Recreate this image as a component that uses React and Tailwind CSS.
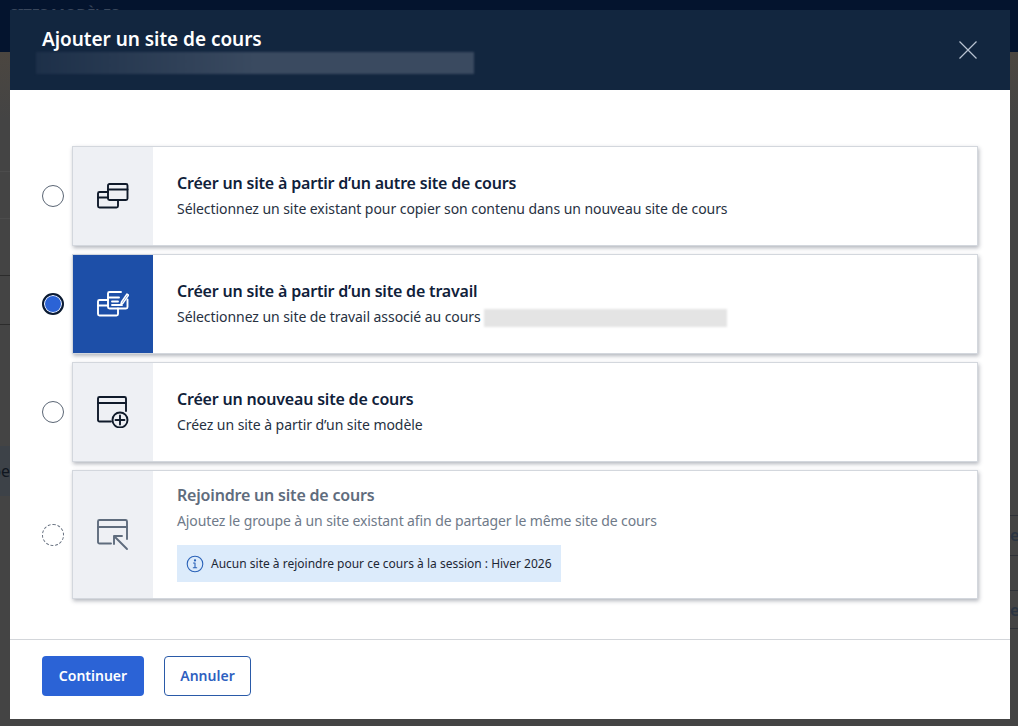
import React from "react";

function Radio({ state }) {
  if (state === "checked")
    return (
      <div className="w-[22px] h-[22px] rounded-full border-2 border-[#0b1a30] bg-[#2b63d6] shadow-[inset_0_0_0_1px_#fff]" />
    );
  if (state === "disabled")
    return <div className="w-[22px] h-[22px] rounded-full border border-dashed border-[#66707f] bg-white" />;
  return <div className="w-[22px] h-[22px] rounded-full border border-[#5b6675] bg-white" />;
}

function CopyIcon({ color }) {
  return (
    <svg width="32" height="26" viewBox="0 0 32 26" fill="none" stroke={color} strokeWidth="1.9" strokeLinejoin="round" strokeLinecap="round">
      <rect x="11" y="1" width="19.500" height="16" rx="1.500" />
      <path d="M11 6.500h19.500" />
      <path d="M11 9H2.500A1.500 1.500 0 0 0 1 10.500V23a1.500 1.500 0 0 0 1.500 1.500h17A1.500 1.500 0 0 0 21 23v-6" />
      <path d="M1 14.500h10" />
    </svg>
  );
}

function WorkIcon({ color }) {
  return (
    <svg width="32" height="26" viewBox="0 0 32 26" fill="none" stroke={color} strokeWidth="1.9" strokeLinejoin="round" strokeLinecap="round">
      <path d="M24 1H12.500A1.500 1.500 0 0 0 11 2.500V16a1.500 1.500 0 0 0 1.500 1.500H29a1.500 1.500 0 0 0 1.500-1.500V8.500" />
      <path d="M11 6.500h11" />
      <path d="M15 10.500h6M15 14h10" />
      <path d="M24.500 11l5.500-8 1.500 1.200-5.500 8-2 .6z" strokeWidth="1.500" />
      <path d="M11 9H2.500A1.500 1.500 0 0 0 1 10.500V23a1.500 1.500 0 0 0 1.500 1.500h17A1.500 1.500 0 0 0 21 23v-5.500" />
      <path d="M1 14.500h10" />
    </svg>
  );
}

function NewIcon({ color }) {
  return (
    <svg width="32" height="32" viewBox="0 0 32 32" fill="none" stroke={color} strokeWidth="1.9" strokeLinejoin="round" strokeLinecap="round">
      <path d="M14 25.500H2.500A1.500 1.500 0 0 1 1 24V2.500A1.500 1.500 0 0 1 2.500 1h25A1.500 1.500 0 0 1 29 2.500V15" />
      <path d="M1 7h28" />
      <circle cx="23" cy="24" r="7.500" />
      <path d="M23 19.500v9M18.500 24h9" />
    </svg>
  );
}

function JoinIcon({ color }) {
  return (
    <svg width="32" height="32" viewBox="0 0 32 32" fill="none" stroke={color} strokeWidth="1.9" strokeLinejoin="round" strokeLinecap="round">
      <path d="M14 24.500H2.500A1.500 1.500 0 0 1 1 23V2.500A1.500 1.500 0 0 1 2.500 1h26A1.500 1.500 0 0 1 30 2.500V20" />
      <path d="M1 8h29" />
      <path d="M17 17l13 13M17 17v8M17 17h8" />
    </svg>
  );
}

function InfoIcon() {
  return (
    <svg width="18" height="18" viewBox="0 0 18 18" fill="none" stroke="#2a62b8" strokeWidth="1.100" strokeLinecap="round">
      <circle cx="9" cy="9" r="7.800" />
      <path d="M9 8v4.500M7.500 8H9M7.300 12.700h3.400" />
      <circle cx="9" cy="5.400" r=".6" fill="#2a62b8" />
    </svg>
  );
}

function Option({ radio, selected, disabled, height, top, icon, title, children }) {
  return (
    <div className="flex items-center">
      <div className="w-[62px] pl-[32px] flex-none flex items-center">
        <Radio state={radio} />
      </div>
      <div className={`flex flex-1 border border-[#d3d7dd] bg-white shadow-[1px_2px_4px_rgba(40,50,70,0.35)] ${height}`}>
        <div className={`w-[80px] flex-none flex items-center justify-center ${selected ? "bg-[#1d4fa8]" : "bg-[#eef0f4]"}`}>
          {icon}
        </div>
        <div className={`flex-1 pl-[24px] ${top}`}>
          <div className={`text-[16px] leading-[24px] font-semibold tracking-[-0.19px] ${disabled ? "text-[#5f6c7d]" : "text-[#10213a]"}`}>
            {title}
          </div>
          <div className={`text-[14px] leading-[20px] mt-[4px] ${disabled ? "tracking-[-0.11px] text-[#6f7a89]" : "tracking-[-0.06px] text-[#27313f]"}`}>
            {children}
          </div>
        </div>
      </div>
    </div>
  );
}

export default function App() {
  return (
    <div className="relative w-[1018px] h-[726px] overflow-hidden bg-[#444444] font-['Noto_Sans','Open_Sans',sans-serif]">
      <div className="h-[52px] bg-[#04142e] pl-[10px] pt-[3px] text-[15px] leading-[20px] font-semibold tracking-[-0.3px] text-[#3a475c]">SITES MODÈLES</div>

      {/* page behind the dimmed overlay, visible only at the edges */}
      <div className="flex justify-between h-[674px] bg-gradient-to-b from-[#4b4640] to-[#444444] to-[10%]">
        <div className="w-[10px] flex flex-col">
          <div className="h-[120px] border-b border-[#4c4c4c]" />
          <div className="h-[47px] border-b border-[#4c4c4c]" />
          <div className="h-[57px] border-b border-[#2c2c2c]" />
          <div className="h-[49px] border-b border-[#2c2c2c]" />
          <div className="h-[121px]" />
          <div className="h-[50px] bg-[#3d4248] text-[16px] leading-[50px] text-[#10161f] whitespace-nowrap flex justify-end overflow-hidden">pe</div>
        </div>
        <div className="w-[8px] flex flex-col">
          <div className="h-[463px]" />
          <div className="h-[40px] border-t border-[#2f3238] text-[16px] font-semibold text-[#2a3442] leading-[38px] overflow-hidden">e</div>
          <div className="h-[35px] border-t border-[#2f3238]" />
          <div className="h-[38px] border-t border-[#2f3238] text-[16px] font-semibold text-[#2a3442] leading-[38px] overflow-hidden">e</div>
          <div className="h-[40px] border-t border-[#2f3238]" />
        </div>
      </div>

      <div className="absolute left-[10px] top-[10px] w-[1000px] h-[709px] bg-white flex flex-col">
        <div className="h-[80px] flex-none bg-[#12263f] relative pl-[32px] pt-[15px]">
          <div className="text-[19px] leading-[28px] font-semibold tracking-[-0.04px] text-white">Ajouter un site de cours</div>
          <div className="absolute left-[26px] top-[42px] w-[438px] h-[22px] blur-[1px] bg-gradient-to-r from-[#1d3049] via-[#3a4a60] to-[#3a4a60]" />
          <button className="absolute right-[33px] top-[31px]">
            <svg width="18" height="18" viewBox="0 0 18 18" stroke="#b9c3d1" strokeWidth="1.200" fill="none">
              <path d="M.5.5l17 17M17.500.5l-17 17" />
            </svg>
          </button>
        </div>

        <div className="flex-1 pt-[56px] pr-[32px] flex flex-col gap-[8px]">
          <Option radio="default" height="h-[100px]" top="pt-[24px]" icon={<CopyIcon color="#0f1a2a" />} title="Créer un site à partir d’un autre site de cours">
            Sélectionnez un site existant pour copier son contenu dans un nouveau site de cours
          </Option>
          <Option radio="checked" selected height="h-[100px]" top="pt-[24px]" icon={<WorkIcon color="#ffffff" />} title="Créer un site à partir d’un site de travail">
            <span className="inline-flex items-center">
              Sélectionnez un site de travail associé au cours
              <span className="inline-block ml-[3px] mt-[2px] w-[243px] h-[18px] bg-[#e4e4e4] blur-[1px]" />
            </span>
          </Option>
          <Option radio="default" height="h-[100px]" top="pt-[24px]" icon={<NewIcon color="#0f1a2a" />} title="Créer un nouveau site de cours">
            Créez un site à partir d’un site modèle
          </Option>
          <Option radio="disabled" disabled height="h-[129px]" top="pt-[12px]" icon={<JoinIcon color="#5f6c7d" />} title="Rejoindre un site de cours">
            Ajoutez le groupe à un site existant afin de partager le même site de cours
            <div className="mt-[14px] inline-flex items-center w-[384px] h-[37px] bg-[#dcebfb] pl-[9px] gap-[7px] text-[12px] tracking-normal text-[#1d2735]">
              <InfoIcon />
              Aucun site à rejoindre pour ce cours à la session : Hiver 2026
            </div>
          </Option>
        </div>

        <div className="h-[80px] flex-none border-t border-[#d3d6da] pl-[32px] pt-[16px] flex items-start gap-[20px]">
          <button className="w-[102px] h-[40px] pb-[2px] rounded-[4px] bg-[#2b63d6] text-white text-[14px] font-semibold">Continuer</button>
          <button className="w-[87px] h-[40px] pb-[2px] rounded-[4px] border border-[#2a5aa8] bg-white text-[#2f5fc0] text-[14px] font-semibold">Annuler</button>
        </div>
      </div>
    </div>
  );
}
